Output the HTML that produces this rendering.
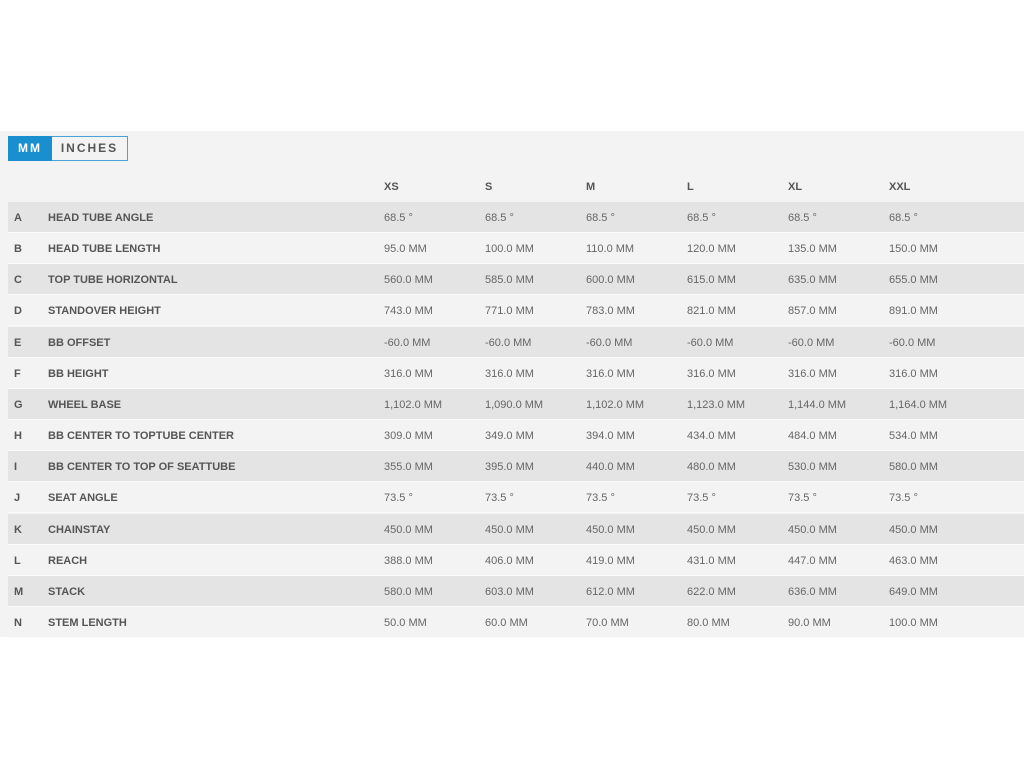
<!DOCTYPE html>
<html><head><style>
body{margin:0;width:1024px;height:768px;background:#fff;font-family:"Liberation Sans",sans-serif;position:relative;overflow:hidden}
#panel{position:absolute;left:0;top:131px;width:1024px;height:506px;background:#f3f3f3}
.btn{position:absolute;top:136px;height:25px;box-sizing:border-box;font-weight:bold;font-size:12px;letter-spacing:2px;line-height:23px;text-align:center}
.row{position:absolute;left:8px;width:1016px;height:31px;border-bottom:1px solid #fafafa;box-sizing:border-box}
.c{position:absolute;top:1px;line-height:31px;font-size:11px;color:#666}
.b{font-weight:bold;color:#555}
</style></head><body>
<div id="panel"></div>
<div class="btn" style="left:8px;width:44px;background:#1a8fd0;color:#fff;border:1px solid #1a8fd0">MM</div>
<div class="btn" style="left:52px;width:76px;border:1px solid #4aa3d6;border-left:none;color:#555">INCHES</div>
<div id="t"></div>
<script>
var rows=[["A","HEAD TUBE ANGLE","68.5 °","68.5 °","68.5 °","68.5 °","68.5 °","68.5 °"],
["B","HEAD TUBE LENGTH","95.0 MM","100.0 MM","110.0 MM","120.0 MM","135.0 MM","150.0 MM"],
["C","TOP TUBE HORIZONTAL","560.0 MM","585.0 MM","600.0 MM","615.0 MM","635.0 MM","655.0 MM"],
["D","STANDOVER HEIGHT","743.0 MM","771.0 MM","783.0 MM","821.0 MM","857.0 MM","891.0 MM"],
["E","BB OFFSET","-60.0 MM","-60.0 MM","-60.0 MM","-60.0 MM","-60.0 MM","-60.0 MM"],
["F","BB HEIGHT","316.0 MM","316.0 MM","316.0 MM","316.0 MM","316.0 MM","316.0 MM"],
["G","WHEEL BASE","1,102.0 MM","1,090.0 MM","1,102.0 MM","1,123.0 MM","1,144.0 MM","1,164.0 MM"],
["H","BB CENTER TO TOPTUBE CENTER","309.0 MM","349.0 MM","394.0 MM","434.0 MM","484.0 MM","534.0 MM"],
["I","BB CENTER TO TOP OF SEATTUBE","355.0 MM","395.0 MM","440.0 MM","480.0 MM","530.0 MM","580.0 MM"],
["J","SEAT ANGLE","73.5 °","73.5 °","73.5 °","73.5 °","73.5 °","73.5 °"],
["K","CHAINSTAY","450.0 MM","450.0 MM","450.0 MM","450.0 MM","450.0 MM","450.0 MM"],
["L","REACH","388.0 MM","406.0 MM","419.0 MM","431.0 MM","447.0 MM","463.0 MM"],
["M","STACK","580.0 MM","603.0 MM","612.0 MM","622.0 MM","636.0 MM","649.0 MM"],
["N","STEM LENGTH","50.0 MM","60.0 MM","70.0 MM","80.0 MM","90.0 MM","100.0 MM"]];
var xs=[6,40,376,477,578,679,780,881],h='';
h+='<div class="row" style="top:171px;border:none">';
["XS","S","M","L","XL","XXL"].forEach(function(s,i){h+='<div class="c b" style="left:'+xs[i+2]+'px">'+s+'</div>'});
h+='</div>';
rows.forEach(function(r,k){
h+='<div class="row" style="top:'+(202+k*31.15)+'px;background:'+(k%2?'#f3f3f3':'#e4e4e4')+'">';
r.forEach(function(v,i){h+='<div class="c'+(i<2?' b':'')+'" style="left:'+xs[i]+'px">'+v+'</div>'});
h+='</div>';});
document.getElementById('t').innerHTML=h;
</script>
</body></html>
